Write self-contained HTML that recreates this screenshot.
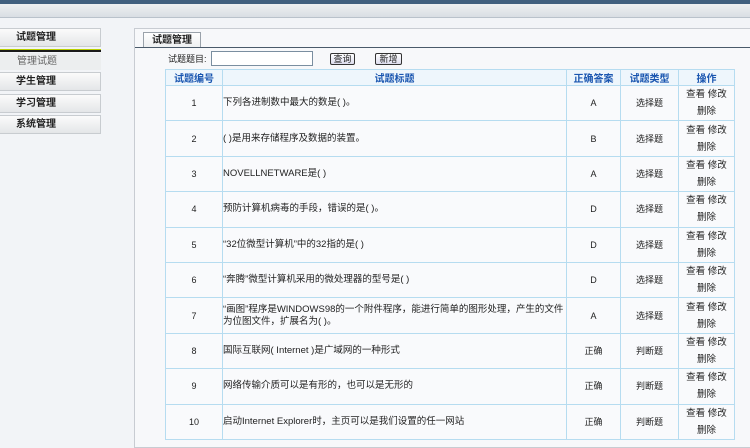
<!DOCTYPE html>
<html><head><meta charset="utf-8"><style>
*{margin:0;padding:0;box-sizing:border-box}
body{width:750px;height:438px;overflow:hidden;background:#f2f4f7;font-family:"Liberation Sans","Noto Sans CJK SC",sans-serif;font-size:9px;color:#222;position:relative}
.top{position:absolute;left:0;top:0;width:750px;height:4px;background:#41607f}
.band{position:absolute;left:0;top:4px;width:750px;height:14px;background:linear-gradient(#eef0f2,#d9dee3);border-bottom:1px solid #b9c2cb}
.side{position:absolute;left:0;top:28px;width:101px}
.it{position:absolute;left:0;width:101px;height:19px;background:linear-gradient(#fbfbfb,#e4e6e8);border:1px solid #c8ccd0;border-left:none;font-weight:bold;font-size:10px;padding-left:16px;line-height:17px}
.bar{position:absolute;left:0;top:21px;width:101px;height:3px;background:#1a1a1a;border-top:1px solid #b9d000}
.sub{position:absolute;left:0;top:25px;width:101px;height:17px;background:#eceeef;color:#666;padding-left:17px;line-height:17px;font-size:10px}
.panel{position:absolute;left:134px;top:28px;width:620px;height:420px;background:#f7f8fa;border:1px solid #c8ccd2}
.tab{position:absolute;left:143px;top:32px;width:58px;height:16px;background:linear-gradient(#fff,#eceef0);border:1px solid #9aa2aa;border-bottom:none;font-weight:bold;font-size:10px;line-height:15px;text-align:center}
.line{position:absolute;left:135px;top:47px;width:615px;height:1px;background:#4a5a6a}
.q{position:absolute;left:168px;top:52px;font-size:9px}
.inp{position:absolute;left:211px;top:51px;width:102px;height:15px;background:#fff;border:1px solid #7a8ea0}
.btn{position:absolute;top:53px;height:12px;border:1px solid #333;border-radius:2px;background:linear-gradient(#fff,#dde);font-size:9px;line-height:10px;text-align:center}
table{position:absolute;left:165px;top:69px;border-collapse:collapse;table-layout:fixed}
td,th{border:1px solid #b6dcf0;text-align:center;font-size:9px}
th{height:14px;color:#1a56b0;background:#eef6fc;font-size:10px}
td{height:35.4px;background:#f9fafc;line-height:12px}
td.t{text-align:left;padding-left:0;font-size:9.5px}
td.o{line-height:17px;font-size:9.5px}
</style></head><body>
<div class="top"></div><div class="band"></div>
<div class="side">
<div class="it" style="top:0">试题管理</div>
<div class="bar"></div>
<div class="sub">管理试题</div>
<div class="it" style="top:44px">学生管理</div>
<div class="it" style="top:66px">学习管理</div>
<div class="it" style="top:87px">系统管理</div>
</div>
<div class="panel"></div>
<div class="tab">试题管理</div>
<div class="line"></div>
<div class="q">试题题目:</div><div class="inp"></div>
<div class="btn" style="left:330px;width:25px">查询</div>
<div class="btn" style="left:375px;width:27px">新增</div>
<table>
<colgroup><col style="width:57px"><col style="width:344px"><col style="width:54px"><col style="width:58px"><col style="width:56px"></colgroup>
<tr><th>试题编号</th><th>试题标题</th><th>正确答案</th><th>试题类型</th><th>操作</th></tr>
<tr><td>1</td><td class="t">下列各进制数中最大的数是( )。</td><td>A</td><td>选择题</td><td class="o">查看 修改<br>删除</td></tr>
<tr><td>2</td><td class="t">( )是用来存储程序及数据的装置。</td><td>B</td><td>选择题</td><td class="o">查看 修改<br>删除</td></tr>
<tr><td>3</td><td class="t">NOVELLNETWARE是( )</td><td>A</td><td>选择题</td><td class="o">查看 修改<br>删除</td></tr>
<tr><td>4</td><td class="t">预防计算机病毒的手段，错误的是( )。</td><td>D</td><td>选择题</td><td class="o">查看 修改<br>删除</td></tr>
<tr><td>5</td><td class="t">“32位微型计算机”中的32指的是( )</td><td>D</td><td>选择题</td><td class="o">查看 修改<br>删除</td></tr>
<tr><td>6</td><td class="t">“奔腾”微型计算机采用的微处理器的型号是( )</td><td>D</td><td>选择题</td><td class="o">查看 修改<br>删除</td></tr>
<tr><td>7</td><td class="t">“画图”程序是WINDOWS98的一个附件程序，能进行简单的图形处理，产生的文件为位图文件，扩展名为( )。</td><td>A</td><td>选择题</td><td class="o">查看 修改<br>删除</td></tr>
<tr><td>8</td><td class="t">国际互联网( Internet )是广域网的一种形式</td><td>正确</td><td>判断题</td><td class="o">查看 修改<br>删除</td></tr>
<tr><td>9</td><td class="t">网络传输介质可以是有形的，也可以是无形的</td><td>正确</td><td>判断题</td><td class="o">查看 修改<br>删除</td></tr>
<tr><td>10</td><td class="t">启动Internet Explorer时，主页可以是我们设置的任一网站</td><td>正确</td><td>判断题</td><td class="o">查看 修改<br>删除</td></tr>
</table>
</body></html>
